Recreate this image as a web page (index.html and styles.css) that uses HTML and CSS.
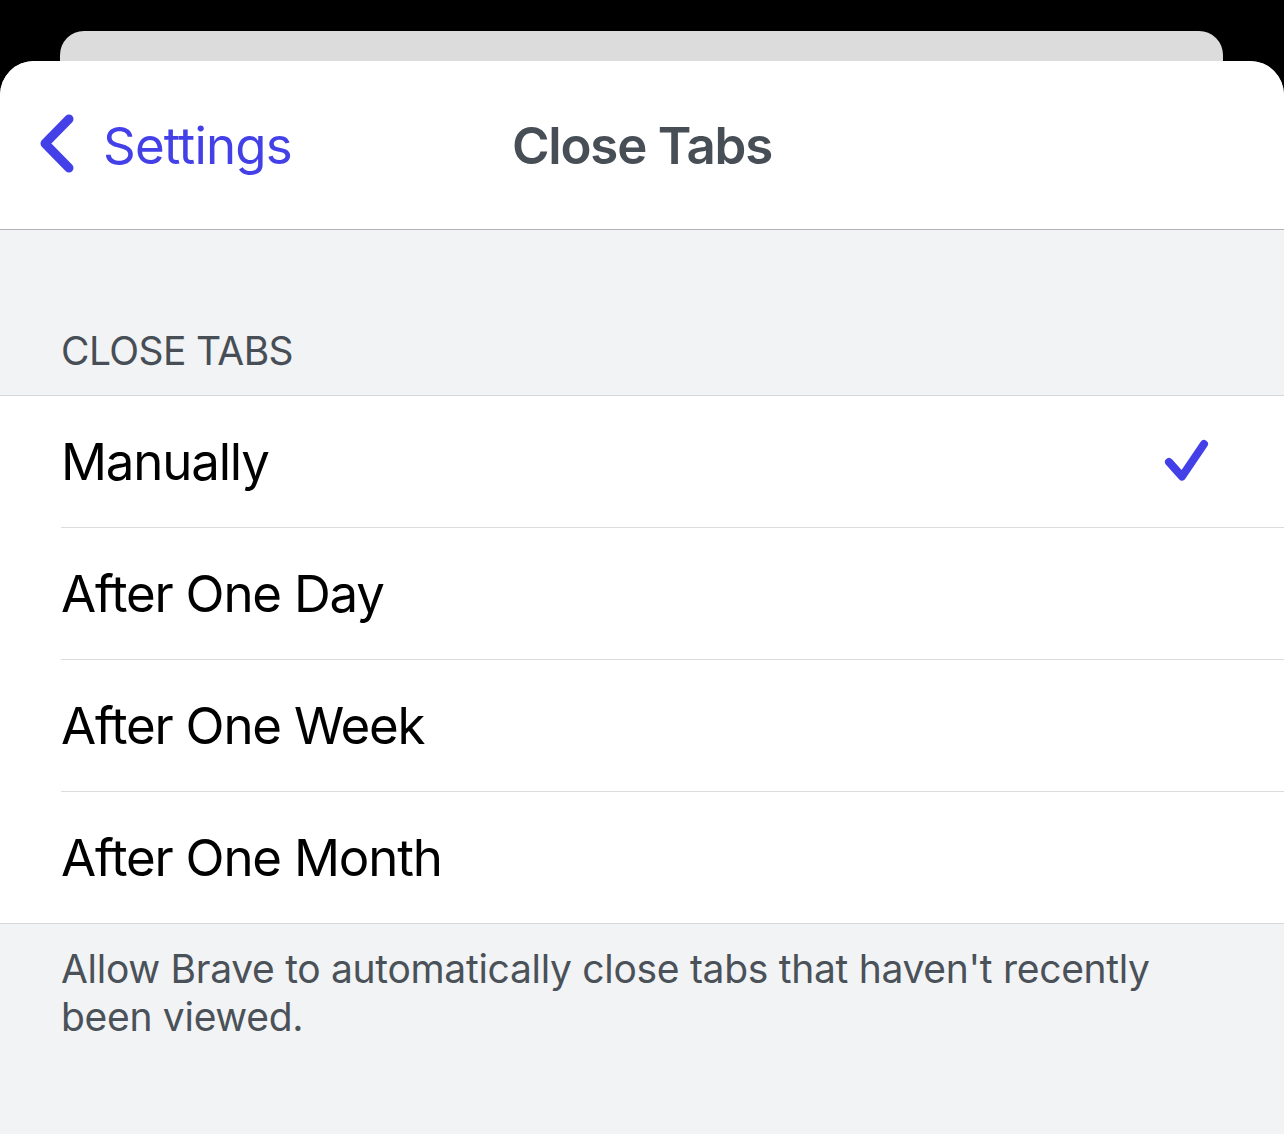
FILE: index.html
```html
<!DOCTYPE html>
<html lang="en">
<head>
<meta charset="utf-8">
<title>Close Tabs</title>
<link rel="stylesheet" href="styles.css">
</head>
<body>
<div class="screen">
  <div class="back-card"></div>
  <div class="sheet">
    <header class="nav">
      <a class="back" href="#">
        <svg class="chevron" width="40" height="62" viewBox="0 0 40 62" aria-hidden="true">
          <path d="M30 5 L6 29.5 L30 54" fill="none" stroke="currentColor" stroke-width="9" stroke-linecap="round" stroke-linejoin="round"/>
        </svg>
        <span>Settings</span>
      </a>
      <h1 class="title">Close Tabs</h1>
      <div class="spacer"></div>
    </header>
    <div class="section-header">CLOSE TABS</div>
    <ul class="list">
      <li class="row"><span>Manually</span>
        <svg class="check" width="52" height="48" viewBox="0 0 52 48" aria-hidden="true">
          <path d="M9 24 L22 38.5 L44 6" fill="none" stroke="currentColor" stroke-width="8" stroke-linecap="round" stroke-linejoin="round"/>
        </svg>
      </li>
      <li class="row"><span>After One Day</span></li>
      <li class="row"><span>After One Week</span></li>
      <li class="row"><span>After One Month</span></li>
    </ul>
    <p class="footer">Allow Brave to automatically close tabs that haven't recently been viewed.</p>
  </div>
</div>
</body>
</html>
```

FILE: styles.css
```css
html, body {
  margin: 0;
  padding: 0;
  background: #000;
  height: 100%;
}
body {
  font-family: Inter, "Noto Sans", "Liberation Sans", sans-serif;
}
.screen {
  padding-top: 31px;
  min-height: 1134px;
  box-sizing: border-box;
  display: flex;
  flex-direction: column;
}
.back-card {
  height: 30px;
  margin: 0 61px 0 60px;
  background: #dcdcdc;
  border-radius: 24px 24px 0 0;
}
.sheet {
  flex: 1;
  background: #f2f3f5;
  border-radius: 34px 34px 0 0;
  overflow: hidden;
}
.nav {
  height: 168px;
  background: #fff;
  border-bottom: 1px solid #b2b2b4;
  display: grid;
  grid-template-columns: 1fr auto 1fr;
  align-items: center;
}
.back {
  display: flex;
  align-items: center;
  gap: 24px;
  padding-left: 39px;
  color: #4440e8;
  text-decoration: none;
  font-size: 51px;
  letter-spacing: -0.8px;
}
.chevron {
  display: block;
}
.title {
  margin: 0;
  font-size: 51px;
  font-weight: 600;
  color: #474e56;
  letter-spacing: -1.2px;
}
.section-header {
  height: 165px;
  box-sizing: border-box;
  display: flex;
  align-items: flex-end;
  padding: 0 0 21px 61px;
  font-size: 39px;
  color: #474e56;
  letter-spacing: -0.6px;
}
.list {
  list-style: none;
  margin: 0;
  padding: 0;
  background: #fff;
  border-top: 1px solid #d8d8da;
  border-bottom: 1px solid #d8d8da;
}
.row {
  height: 131px;
  margin-left: 61px;
  padding-right: 72px;
  display: flex;
  align-items: center;
  justify-content: space-between;
  font-size: 51px;
  color: #000;
  letter-spacing: -1.2px;
  border-bottom: 1px solid #dcdcde;
}
.row:last-child {
  border-bottom: none;
}
.check {
  display: block;
  color: #4440e8;
}
.footer {
  margin: 0;
  padding: 21px 100px 0 61px;
  font-size: 39px;
  line-height: 48px;
  color: #4a5158;
  letter-spacing: -0.3px;
}
```
